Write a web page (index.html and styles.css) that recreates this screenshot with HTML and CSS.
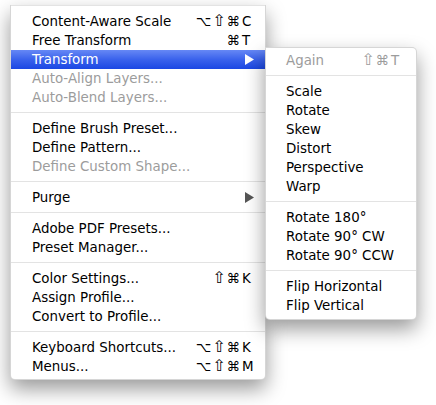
FILE: index.html
```html
<!DOCTYPE html>
<html>
<head>
<meta charset="utf-8">
<link rel="stylesheet" href="styles.css">
</head>
<body>
<div class="stage">
  <div class="menu main">
    <div class="sep"></div>
    <div class="item"><span class="label">Content-Aware Scale</span><span class="mods">⌥<span class="shift">⇧</span>⌘</span><span class="key">C</span></div>
    <div class="item"><span class="label">Free Transform</span><span class="mods">⌘</span><span class="key">T</span></div>
    <div class="item active"><span class="label">Transform</span><svg class="arrow" width="9" height="11" viewBox="0 0 9 11"><polygon points="0,0 9,5.5 0,11"/></svg></div>
    <div class="item disabled"><span class="label">Auto-Align Layers...</span></div>
    <div class="item disabled"><span class="label">Auto-Blend Layers...</span></div>
    <div class="sep"></div>
    <div class="item"><span class="label">Define Brush Preset...</span></div>
    <div class="item"><span class="label">Define Pattern...</span></div>
    <div class="item disabled"><span class="label">Define Custom Shape...</span></div>
    <div class="sep"></div>
    <div class="item"><span class="label">Purge</span><svg class="arrow" width="9" height="11" viewBox="0 0 9 11"><polygon points="0,0 9,5.5 0,11"/></svg></div>
    <div class="sep"></div>
    <div class="item"><span class="label">Adobe PDF Presets...</span></div>
    <div class="item"><span class="label">Preset Manager...</span></div>
    <div class="sep"></div>
    <div class="item"><span class="label">Color Settings...</span><span class="mods"><span class="shift">⇧</span>⌘</span><span class="key">K</span></div>
    <div class="item"><span class="label">Assign Profile...</span></div>
    <div class="item"><span class="label">Convert to Profile...</span></div>
    <div class="sep"></div>
    <div class="item"><span class="label">Keyboard Shortcuts...</span><span class="mods">⌥<span class="shift">⇧</span>⌘</span><span class="key">K</span></div>
    <div class="item"><span class="label">Menus...</span><span class="mods">⌥<span class="shift">⇧</span>⌘</span><span class="key">M</span></div>
  </div>
  <div class="menu sub">
    <div class="item disabled"><span class="label">Again</span><span class="mods"><span class="shift">⇧</span>⌘</span><span class="key">T</span></div>
    <div class="sep"></div>
    <div class="item"><span class="label">Scale</span></div>
    <div class="item"><span class="label">Rotate</span></div>
    <div class="item"><span class="label">Skew</span></div>
    <div class="item"><span class="label">Distort</span></div>
    <div class="item"><span class="label">Perspective</span></div>
    <div class="item"><span class="label">Warp</span></div>
    <div class="sep"></div>
    <div class="item"><span class="label">Rotate 180°</span></div>
    <div class="item"><span class="label">Rotate 90° CW</span></div>
    <div class="item"><span class="label">Rotate 90° CCW</span></div>
    <div class="sep"></div>
    <div class="item"><span class="label">Flip Horizontal</span></div>
    <div class="item"><span class="label">Flip Vertical</span></div>
  </div>
</div>
</body>
</html>
```
FILE: styles.css
```css
html, body {
  margin: 0;
  padding: 0;
  background: #ffffff;
}
.stage {
  position: relative;
  width: 436px;
  height: 405px;
  overflow: hidden;
  font-family: "DejaVu Sans", sans-serif;
  font-size: 13.4px;
  color: #000;
}
.menu {
  box-sizing: border-box;
  background: #ffffff;
  border: 1px solid rgba(0, 0, 0, 0.16);
  box-shadow: 0 9px 20px rgba(0, 0, 0, 0.4);
}
.main {
  margin-left: 10px;
  width: 256px;
  border-top: none;
  border-radius: 0 0 5px 5px;
  padding: 0 0 3px 0;
}
.sub {
  position: absolute;
  left: 265px;
  top: 47px;
  width: 152px;
  padding: 3px 0 4px 0;
  border-radius: 0 5px 5px 5px;
}
.item {
  display: flex;
  align-items: center;
  height: 19px;
  line-height: 19px;
  padding: 0 11px 0 21px;
  white-space: nowrap;
}
.sub .item {
  padding: 0 13px 0 20px;
}
.label {
  flex: 1;
}
.mods {
  text-align: right;
  padding-right: 2px;
}
.shift {
  font-size: 1.2em;
  line-height: 1;
  margin: 0 1px;
}
.key {
  width: 12px;
  text-align: left;
}
.disabled {
  color: #9c9c9c;
}
.active {
  background: linear-gradient(to bottom, #6688f5 0%, #3a62ec 50%, #1b47e3 100%);
  color: #ffffff;
}
.arrow {
  display: block;
  fill: #555555;
}
.active .arrow {
  fill: #ffffff;
}
.sep {
  height: 1px;
  background: #e3e3e3;
  margin: 5px 0 6px 0;
}
```
